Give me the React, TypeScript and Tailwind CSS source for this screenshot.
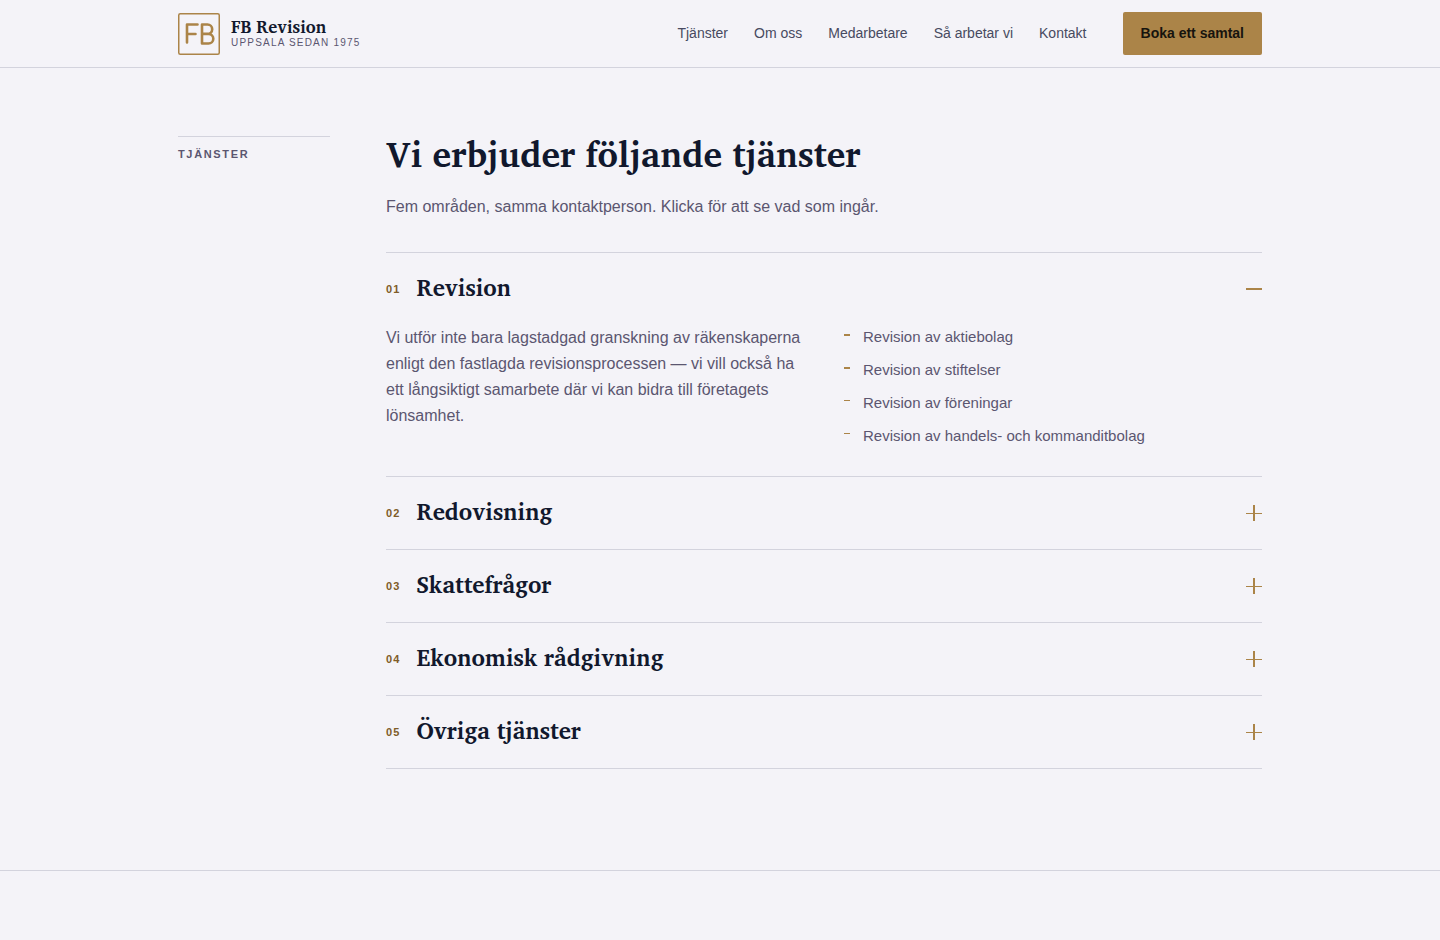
import { useState } from 'react';
import clsx from 'clsx';

type Service = {
  title: string;
  text: string;
  items: string[];
};

const nav = [
  { href: '#tjanster', label: 'Tjänster' },
  { href: '#om-oss', label: 'Om oss' },
  { href: '#medarbetare', label: 'Medarbetare' },
  { href: '#arbetssatt', label: 'Så arbetar vi' },
  { href: '#kontakt', label: 'Kontakt' }
];

const services: Service[] = [
  {
    title: 'Revision',
    text: 'Vi utför inte bara lagstadgad granskning av räkenskaperna enligt den fastlagda revisionsprocessen — vi vill också ha ett långsiktigt samarbete där vi kan bidra till företagets lönsamhet.',
    items: ['Revision av aktiebolag', 'Revision av stiftelser', 'Revision av föreningar', 'Revision av handels- och kommanditbolag']
  },
  { title: 'Redovisning', text: '', items: [] },
  { title: 'Skattefrågor', text: '', items: [] },
  { title: 'Ekonomisk rådgivning', text: '', items: [] },
  { title: 'Övriga tjänster', text: '', items: [] }
];

const serif = "font-['Charis_SIL','Liberation_Serif',serif]";

function Logo() {
  return (
    <svg width="42" height="42" viewBox="0 0 42 42" fill="none" stroke="#ab8448" aria-hidden="true">
      <rect x="0.75" y="0.75" width="40.5" height="40.5" rx="1.5" strokeWidth="1.5" />
      <path d="M9 29.5V11.5H19.5M9 21H17.5" strokeWidth="2.6" strokeLinecap="round" strokeLinejoin="round" />
      <path d="M24 11.5V30.5H30.5A4.8 4.8 0 0 0 30.5 20.9H24M24 11.5H29.5A4.7 4.7 0 0 1 29.5 20.9" strokeWidth="2.6" strokeLinecap="round" strokeLinejoin="round" />
    </svg>
  );
}

function ToggleIcon({ open }: { open: boolean }) {
  return (
    <svg width="16" height="16" viewBox="0 0 16 16" fill="#ab8448" className="shrink-0" aria-hidden="true">
      {open ? (
        <rect y="7" width="16" height="2" />
      ) : (
        <>
          <rect y="8" width="16" height="1" />
          <rect x="7" width="2" height="16" />
        </>
      )}
    </svg>
  );
}

function ServiceRow({ service, index, open, onToggle }: { service: Service; index: number; open: boolean; onToggle: () => void }) {
  return (
    <div className="border-b border-[#d3d3dd]">
      <h3>
        <button type="button" aria-expanded={open} onClick={onToggle} className="flex h-18 w-full cursor-pointer items-center gap-4 text-left">
          <span className="text-[11px] font-bold tracking-widest text-[#7f5c28]">0{index + 1}</span>
          <span className={clsx(serif, 'flex-1 pb-1 text-[23px] leading-8 font-semibold text-[#11182d]')}>{service.title}</span>
          <ToggleIcon open={open} />
        </button>
      </h3>
      {open && service.text && (
        <div className="grid gap-x-10 gap-y-6 pb-7 md:grid-cols-2">
          <p className="text-base leading-[26px]">{service.text}</p>
          <ul className="space-y-[9px] text-[15px] leading-6">
            {service.items.map((item, i) => (
              <li key={item} className="flex gap-[13px]">
                <span className={clsx('mt-[9px] w-1.5 shrink-0 bg-[#ab8448]', i < 2 ? 'h-0.5' : 'h-px')} />
                {item}
              </li>
            ))}
          </ul>
        </div>
      )}
    </div>
  );
}

export default function App() {
  const [openIndex, setOpenIndex] = useState(0);

  return (
    <div className="min-h-screen bg-[#f4f3f8] font-['Liberation_Sans',Arial,sans-serif] text-[#5b5670]">
      <header className="border-b border-[#d3d3dd]">
        <div className="mx-auto flex max-w-[1180px] items-center justify-between gap-6 px-6 py-3 md:px-12">
          <a href="#" className="flex items-center gap-[11px]">
            <Logo />
            <span className="block pb-0.5">
              <span className={clsx(serif, 'block text-[17px] leading-5 font-semibold text-[#11182d]')}>FB Revision</span>
              <span className="block text-[10px] leading-3 tracking-[0.12em] uppercase">Uppsala sedan 1975</span>
            </span>
          </a>
          <nav className="hidden items-center gap-[26px] text-sm text-[#474a60] lg:flex">
            {nav.map((item) => (
              <a key={item.href} href={item.href} className="pb-0.5 hover:text-[#11182d]">{item.label}</a>
            ))}
            <a href="#boka" className="ml-[10px] rounded-xs bg-[#ab8448] px-[18px] py-[11px] leading-[21px] font-bold text-[#17140e]">Boka ett samtal</a>
          </nav>
        </div>
      </header>

      <main>
        <section id="tjanster" className="border-b border-[#d3d3dd]">
          <div className="mx-auto grid max-w-[1180px] gap-x-14 gap-y-8 px-6 pt-17 pb-[101px] md:grid-cols-[152px_1fr] md:px-12">
            <div>
              <p className="border-t border-[#d3d3dd] pt-[9px] text-[11px] leading-4 font-bold tracking-[0.15em] uppercase">Tjänster</p>
            </div>
            <div>
              <h2 className={clsx(serif, 'text-[35px] leading-9 font-semibold text-[#11182d]')}>Vi erbjuder följande tjänster</h2>
              <p className="mt-[22px] text-base leading-[26px]">Fem områden, samma kontaktperson. Klicka för att se vad som ingår.</p>
              <div className="mt-8 border-t border-[#d3d3dd]">
                {services.map((service, i) => (
                  <ServiceRow key={service.title} service={service} index={i} open={openIndex === i} onToggle={() => setOpenIndex(openIndex === i ? -1 : i)} />
                ))}
              </div>
            </div>
          </div>
        </section>
      </main>
    </div>
  );
}
